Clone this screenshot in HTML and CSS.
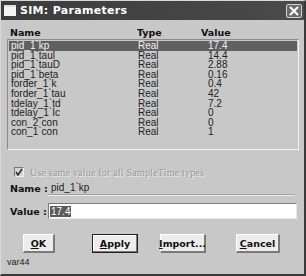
FILE: index.html
```html
<!DOCTYPE html>
<html>
<head>
<meta charset="utf-8">
<link rel="stylesheet" href="styles.css">
</head>
<body>
<div class="window">
  <div class="titlebar">
    <span class="app-icon"></span>
    <span class="title">SIM: Parameters</span>
    <span class="close"><svg width="12" height="10" viewBox="0 0 12 10"><path d="M2 1 L10 9 M10 1 L2 9" stroke="#fff" stroke-width="2"/></svg></span>
  </div>
  <div class="content">
    <div class="head">
      <span class="c1">Name</span><span class="c2">Type</span><span class="c3">Value</span>
    </div>
    <div class="list">
      <div class="row sel"><span class="c1">pid_1`kp</span><span class="c2">Real</span><span class="c3">17.4</span></div>
      <div class="row"><span class="c1">pid_1`taul</span><span class="c2">Real</span><span class="c3">14.4</span></div>
      <div class="row"><span class="c1">pid_1`tauD</span><span class="c2">Real</span><span class="c3">2.88</span></div>
      <div class="row"><span class="c1">pid_1`beta</span><span class="c2">Real</span><span class="c3">0.16</span></div>
      <div class="row"><span class="c1">forder_1`k</span><span class="c2">Real</span><span class="c3">0.4</span></div>
      <div class="row"><span class="c1">forder_1`tau</span><span class="c2">Real</span><span class="c3">42</span></div>
      <div class="row"><span class="c1">tdelay_1`td</span><span class="c2">Real</span><span class="c3">7.2</span></div>
      <div class="row"><span class="c1">tdelay_1`Ic</span><span class="c2">Real</span><span class="c3">0</span></div>
      <div class="row"><span class="c1">con_2`con</span><span class="c2">Real</span><span class="c3">0</span></div>
      <div class="row"><span class="c1">con_1`con</span><span class="c2">Real</span><span class="c3">1</span></div>
    </div>
    <div class="check">
      <span class="box"><svg width="8" height="8" viewBox="0 0 8 8"><path d="M1 4 L3 7 L7 1" stroke="#333" stroke-width="1.6" fill="none"/></svg></span>
      <span class="check-label">Use same value for all SampleTime types</span>
    </div>
    <div class="field">
      <span class="flabel">Name :</span>
      <span class="fname">pid_1`kp</span>
    </div>
    <div class="field vfield">
      <span class="flabel">Value :</span>
      <span class="finput"><span class="hl">17.4</span></span>
    </div>
    <div class="buttons">
      <span class="btn b-ok"><u>O</u>K</span>
      <span class="btn b-apply def"><u>A</u>pply</span>
      <span class="btn b-import"><u>I</u>mport...</span>
      <span class="btn b-cancel"><u>C</u>ancel</span>
    </div>
    <div class="status">var44</div>
  </div>
</div>
</body>
</html>
```
FILE: styles.css
```css
html, body { margin: 0; padding: 0; }
body {
  width: 306px; height: 276px; overflow: hidden;
  font-family: "Liberation Sans", Arial, sans-serif;
  font-size: 10px;
  background: #c6c6c6;
}
.window {
  box-sizing: border-box;
  width: 306px; height: 276px;
  background: #c8c8c8;
  border-left: 1px solid #d8d8d8;
  border-top: 1px solid #d8d8d8;
  border-right: 2px solid #3a3a3a;
  border-bottom: 2px solid #3a3a3a;
  display: flex; flex-direction: column;
}
.titlebar {
  height: 19px;
  background: linear-gradient(90deg, #3c3c3c, #4a4a4a);
  display: flex; align-items: center;
  padding: 0 2px 0 3px;
  box-sizing: border-box;
}
.app-icon {
  width: 12px; height: 9px;
  background: #f4f4f4;
  border-top: 2px solid #e0e0e0;
  margin-right: 4px;
}
.title {
  color: #fff; font-weight: bold;
  flex: 1;
  font-family: "DejaVu Sans", sans-serif;
  font-size: 11px;
  letter-spacing: 0.3px;
}
.close {
  width: 16px; height: 14px;
  border: 1px solid #d0d0d0;
  border-radius: 2px;
  background: #6a6a6a;
  box-sizing: border-box;
  display: flex; align-items: center; justify-content: center;
}
.content {
  flex: 1;
  padding: 0 5px 0 6px;
  display: flex; flex-direction: column;
}
.head {
  display: flex; height: 19px; align-items: flex-end;
  padding-bottom: 1px; box-sizing: border-box;
  font-weight: bold; color: #111;
  font-family: "DejaVu Sans", sans-serif; font-size: 9.5px;
}
.c1 { width: 127px; padding-left: 3px; }
.c2 { width: 64px; }
.c3 { width: 60px; padding-left: 6px; }
.head .c3 { padding-left: 0; }
.list {
  box-sizing: border-box;
  height: 111px;
  border-top: 1px solid #8a8a8a;
  border-left: 1px solid #8a8a8a;
  border-right: 1px solid #f4f4f4;
  border-bottom: 1px solid #f4f4f4;
  padding: 1px 1px 0 1px;
  color: #222;
}
.row { display: flex; height: 9.6px; line-height: 9.6px; }
.row .c1 { padding-left: 2px; }
.row .c2 { width: 64px; }
.row .c3 { padding-left: 6px; }
.row.sel { background: #606060; color: #f0f0f0; }
.check {
  display: flex; align-items: center;
  margin-top: 16px; padding-left: 7px; height: 12px;
}
.box {
  width: 10px; height: 10px; box-sizing: border-box;
  border-top: 1px solid #7a7a7a; border-left: 1px solid #7a7a7a;
  border-right: 1px solid #f0f0f0; border-bottom: 1px solid #f0f0f0;
  background: #d4d4d4;
  display: flex; align-items: center; justify-content: center;
  margin-right: 6px;
}
.check-label {
  color: #9a9a9a; text-shadow: 1px 1px 0 #ececec;
  font-family: "Liberation Serif", serif; font-size: 10px;
  letter-spacing: 0.2px;
}
.field {
  display: flex; align-items: center;
  margin-top: 3px; height: 14px;
}
.flabel {
  width: 38px; padding-left: 3px;
  font-weight: bold; color: #111;
  font-family: "DejaVu Sans", sans-serif; font-size: 9.5px;
}
.fname {
  flex: 1; margin-right: 5px;
  border-bottom: 1px solid #a0a0a0;
  box-shadow: 0 1px 0 #ececec;
  padding-left: 3px; line-height: 12px; color: #222;
}
.vfield { margin-top: 8px; height: 16px; }
.finput {
  flex: 1; height: 16px; box-sizing: border-box; margin-right: 2px;
  background: #fff;
  border-top: 1px solid #7a7a7a; border-left: 1px solid #7a7a7a;
  border-right: 1px solid #e8e8e8; border-bottom: 1px solid #e8e8e8;
  padding: 2px 1px; display: flex; align-items: center;
}
.hl { background: #5a5a5a; color: #fff; line-height: 11px; padding: 0 1px; }
.buttons {
  display: flex; margin-top: 15px; height: 19px;
}
.btn {
  box-sizing: border-box; height: 19px;
  background: #ececec;
  border-top: 1px solid #ffffff; border-left: 1px solid #ffffff;
  border-right: 2px solid #7a7a7a; border-bottom: 2px solid #7a7a7a;
  display: flex; align-items: center; justify-content: center;
  font-weight: bold; color: #111;
  font-family: "DejaVu Sans", sans-serif; font-size: 9.5px;
}
.btn u { text-decoration: underline; }
.b-ok { width: 32px; margin-left: 16px; }
.b-apply { width: 46px; margin-left: 37px; }
.b-import { width: 46px; margin-left: 22px; }
.b-cancel { width: 44px; margin-left: 30px; }
.def { border: 1px solid #222; box-shadow: inset -1px -1px 0 #7a7a7a, inset 1px 1px 0 #fff; }
.status {
  margin-top: 4px; padding-left: 0; font-size: 9px; color: #222;
}
```
